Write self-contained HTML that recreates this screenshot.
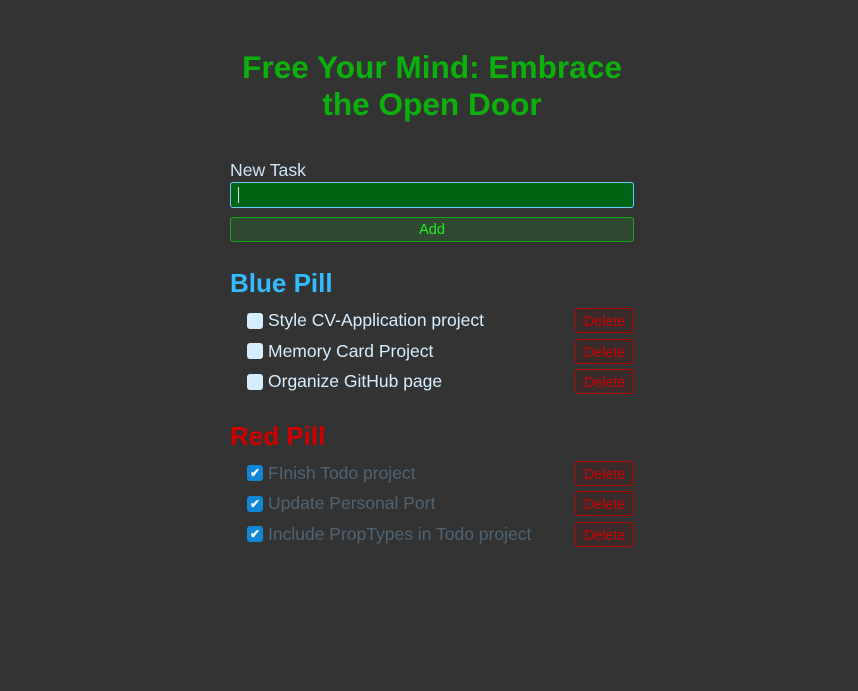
<!DOCTYPE html>
<html><head><meta charset="utf-8"><style>
body{margin:0;width:858px;height:691px;background:#333;font-family:"Liberation Sans",sans-serif;position:relative;overflow:hidden}
.a{position:absolute}
h1{position:absolute;left:0;width:864px;top:49px;margin:0;text-align:center;font-size:31.6px;line-height:37px;color:#0bb00b;font-weight:bold}
.lbl{left:230px;top:160px;font-size:17.6px;color:#cde6f5}
.inp{left:230px;top:182px;width:402px;height:24px;background:#006414;border:1px solid #6cf;border-radius:3px}
.cur{left:238px;top:187px;width:1px;height:16px;background:#ddd}
.add{left:230px;top:217px;width:402px;height:23px;background:#2f4a30;border:1px solid #1a1;border-radius:3px;color:#2e2;font-size:14.5px;text-align:center;line-height:25px}
.h2{left:230px;font-size:26px;font-weight:bold}
.cb{left:247px;width:16px;height:16px;border-radius:3px;background:#d5eeff}
.cb.c{background:#1187d8;color:#fff;font-size:12px;line-height:16px;text-align:center;font-weight:bold}
.t{left:268px;font-size:17.5px;line-height:22px;color:#d5eeff}
.t.d{color:#4e6475}
.del{left:575px;width:57px;height:23px;border:1px solid #b00;border-radius:3px;background:#3a2b2b;color:#c00;font-size:14.3px;text-align:center;line-height:26px}
</style></head><body>
<h1>Free Your Mind: Embrace<br>the Open Door</h1>
<div class="a lbl">New Task</div>
<div class="a inp"></div><div class="a cur"></div>
<div class="a add">Add</div>
<div class="a h2" style="top:268px;color:#33bbff">Blue Pill</div>
<div class="a cb" style="top:313px"></div><div class="a t" style="top:309px">Style CV-Application project</div><div class="a del" style="top:308px">Delete</div>
<div class="a cb" style="top:343px"></div><div class="a t" style="top:340px">Memory Card Project</div><div class="a del" style="top:339px">Delete</div>
<div class="a cb" style="top:374px"></div><div class="a t" style="top:370px">Organize GitHub page</div><div class="a del" style="top:369px">Delete</div>
<div class="a h2" style="top:421px;color:#d00000">Red Pill</div>
<div class="a cb c" style="top:465px">✔</div><div class="a t d" style="top:462px">FInish Todo project</div><div class="a del" style="top:461px">Delete</div>
<div class="a cb c" style="top:496px">✔</div><div class="a t d" style="top:492px">Update Personal Port</div><div class="a del" style="top:491px">Delete</div>
<div class="a cb c" style="top:526px">✔</div><div class="a t d" style="top:523px">Include PropTypes in Todo project</div><div class="a del" style="top:522px">Delete</div>
</body></html>
